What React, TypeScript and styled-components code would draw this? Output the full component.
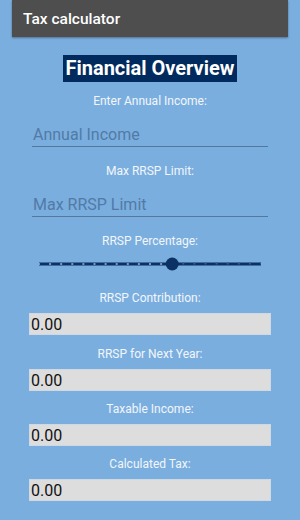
import React from "react";
import styled, { createGlobalStyle } from "styled-components";

const Global = createGlobalStyle`
  html, body {
    margin: 0;
    padding: 0;
    background: #7aaedf;
    font-family: Roboto, "Noto Sans", sans-serif;
  }
  * { box-sizing: border-box; }
`;

const Page = styled.div`
  width: 300px;
  height: 520px;
  padding: 0 12px;
  background: #7aaedf;
  display: flex;
  flex-direction: column;
  overflow: hidden;
`;

const TopBar = styled.div`
  height: 37px;
  background: #4e4e4e;
  box-shadow: 0 1px 2px rgba(0, 0, 0, 0.35);
  display: flex;
  align-items: center;
  padding-left: 11px;
  color: #ffffff;
  font-size: 15.5px;
  font-weight: 500;
  flex-shrink: 0;
`;

const Content = styled.div`
  display: flex;
  flex-direction: column;
  align-items: center;
`;

const Title = styled.h1`
  margin: 18px 0 0;
  height: 27px;
  line-height: 27px;
  padding: 0 2px;
  background: #012a5e;
  color: #ffffff;
  font-size: 20px;
  font-weight: 700;
`;

const Label = styled.div<{ $top: number }>`
  margin-top: ${(p) => p.$top}px;
  height: 15px;
  line-height: 15px;
  font-size: 12px;
  color: #f2f6fb;
  text-align: center;
`;

const TextInput = styled.input`
  margin-top: 13px;
  align-self: stretch;
  margin-left: 20px;
  margin-right: 20px;
  height: 25px;
  padding: 0 1px;
  border: none;
  border-bottom: 1px solid #56779c;
  background: transparent;
  font-family: Roboto, sans-serif;
  font-size: 16px;
  color: #1a2a40;
  outline: none;
  &::placeholder {
    color: #527aa5;
  }
`;

const SliderWrap = styled.div`
  margin-top: 5px;
  align-self: stretch;
  height: 20px;
  padding: 0 27px;
  display: flex;
  align-items: center;
`;

const ValueBox = styled.div`
  margin-top: 7px;
  align-self: stretch;
  margin-left: 17px;
  margin-right: 17px;
  height: 22px;
  background: #dddddd;
  border: 1px solid #cfd9e4;
  padding-left: 1px;
  display: flex;
  align-items: center;
  font-size: 16px;
  color: #111111;
`;

function Slider({ value, max }: { value: number; max: number }) {
  const w = 222;
  const ticks = Array.from({ length: max + 1 }, (_, i) => i);
  const tx = (value / max) * w;
  return (
    <svg width={w} height={20} viewBox={`0 0 ${w} 20`}>
      <rect x={0} y={8.5} width={w} height={3} fill="#0b3165" />
      {ticks.map((i) => (
        <rect
          key={i}
          x={(i / max) * w - 1}
          y={i <= value ? 9 : 8.5}
          width={2}
          height={2}
          fill={i <= value ? "#7e94b4" : "#3c5a85"}
        />
      ))}
      <circle cx={tx} cy={10} r={6.5} fill="#0b3165" />
    </svg>
  );
}

const outputs = [
  { label: "RRSP Contribution:", top: 17 },
  { label: "RRSP for Next Year:", top: 12 },
  { label: "Taxable Income:", top: 11 },
  { label: "Calculated Tax:", top: 11 },
];

export default function App() {
  return (
    <>
      <Global />
      <Page>
        <TopBar>Tax calculator</TopBar>
        <Content>
          <Title>Financial Overview</Title>
          <Label $top={12}>Enter Annual Income:</Label>
          <TextInput placeholder="Annual Income" />
          <Label $top={17}>Max RRSP Limit:</Label>
          <TextInput placeholder="Max RRSP Limit" />
          <Label $top={17}>RRSP Percentage:</Label>
          <SliderWrap>
            <Slider value={12} max={20} />
          </SliderWrap>
          {outputs.map((o) => (
            <React.Fragment key={o.label}>
              <Label $top={o.top}>{o.label}</Label>
              <ValueBox>0.00</ValueBox>
            </React.Fragment>
          ))}
        </Content>
      </Page>
    </>
  );
}
